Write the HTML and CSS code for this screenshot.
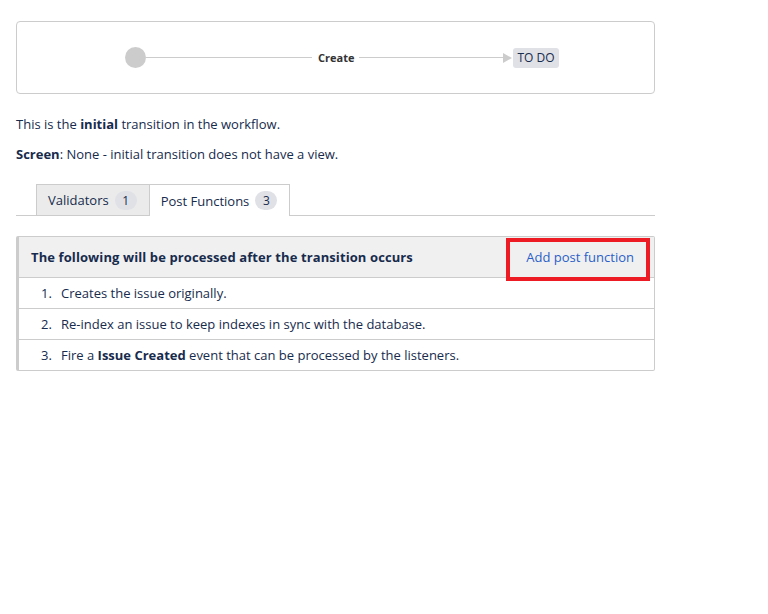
FILE: index.html
```html
<!DOCTYPE html>
<html lang="en">
<head>
    <meta charset="UTF-8">
    <title>Transition: Create</title>
    <link rel="stylesheet" href="styles.css">
</head>
<body>
    <div class="page">
        <div class="diagram">
            <span class="dot"></span>
            <span class="line"></span>
            <span class="trans-name">Create</span>
            <span class="line short"></span>
            <span class="arrow"></span>
            <span class="status">TO DO</span>
        </div>

        <p class="info">This is the <b>initial</b> transition in the workflow.</p>
        <p class="info"><b>Screen</b>: None - initial transition does not have a view.</p>

        <ul class="tabs">
            <li class="tab">Validators <span class="badge">1</span></li>
            <li class="tab active">Post Functions <span class="badge">3</span></li>
        </ul>

        <div class="functions">
            <div class="functions-head">
                <span class="head-title">The following will be processed after the transition occurs</span>
                <a class="add-link" href="#">Add post function</a>
                <span class="highlight"></span>
            </div>
            <ol class="functions-list">
                <li>Creates the issue originally.</li>
                <li>Re-index an issue to keep indexes in sync with the database.</li>
                <li>Fire a <b>Issue Created</b> event that can be processed by the listeners.</li>
            </ol>
        </div>
    </div>
</body>
</html>
```

FILE: styles.css
```css
body {
    margin: 0;
    font-family: 'Open Sans', 'Noto Sans', sans-serif;
    font-size: 13px;
    color: #172b4d;
    background-color: #fff;
}

.page {
    width: 639px;
    padding: 21px 0 0 16px;
}

.diagram {
    height: 71px;
    border: 1px solid #ccc;
    border-radius: 4px;
    display: flex;
    align-items: center;
    padding-left: 108px;
}

.dot {
    width: 21px;
    height: 21px;
    border-radius: 50%;
    background-color: #ccc;
}

.line {
    width: 166px;
    height: 1px;
    background-color: #ccc;
}

.line.short {
    width: 144px;
}

.trans-name {
    font-size: 11px;
    font-weight: bold;
    padding: 0 5px 0 6px;
    color: #333;
}

.arrow {
    width: 0;
    height: 0;
    border-top: 5px solid transparent;
    border-bottom: 5px solid transparent;
    border-left: 9px solid #ccc;
}

.status {
    background-color: #dfe1e6;
    border-radius: 3px;
    padding: 2px 4px;
    font-size: 12px;
    line-height: 16px;
    margin-left: 1px;
}

.info {
    margin: 0;
    line-height: 20px;
    color: #172b4d;
}

.info:first-of-type {
    margin-top: 20px;
    margin-bottom: 10px;
}

.tabs {
    list-style: none;
    margin: 20px 0 0;
    padding: 0 0 0 20px;
    display: flex;
    border-bottom: 1px solid #ccc;
}

.tab {
    height: 30px;
    padding: 0 12px 0 11px;
    display: flex;
    align-items: center;
    gap: 6px;
    background-color: #ebebeb;
    border: 1px solid #ccc;
    border-bottom: none;
    margin-bottom: -1px;
}

.tab.active {
    background-color: #fff;
    border-left: none;
    height: 31px;
}

.badge {
    background-color: #dfe1e6;
    border-radius: 10px;
    min-width: 10px;
    padding: 1px 6px;
    font-size: 12px;
    line-height: 17px;
    text-align: center;
}

.functions {
    margin-top: 20px;
    border: 1px solid #ccc;
    border-left: 3px solid #ccc;
    border-radius: 2px;
}

.functions-head {
    position: relative;
    height: 40px;
    background-color: #f0f0f0;
    border-bottom: 1px solid #ccc;
    display: flex;
    align-items: center;
    justify-content: space-between;
    padding: 0 20px 0 12px;
}

.head-title {
    font-weight: bold;
    letter-spacing: 0.1px;
}

.add-link {
    color: #2a5fc8;
    text-decoration: none;
}

.highlight {
    position: absolute;
    left: 487px;
    top: 1px;
    width: 136px;
    height: 35px;
    border: 4px solid #ed1c24;
}

.functions-list {
    margin: 0;
    padding: 0;
    list-style: none;
    counter-reset: step;
}

.functions-list li {
    counter-increment: step;
    height: 30px;
    line-height: 30px;
    padding-left: 22px;
    border-top: 1px solid #ccc;
}

.functions-list li:first-child {
    border-top: none;
}

.functions-list li::before {
    content: counter(step) ".";
    display: inline-block;
    width: 20px;
}
```
